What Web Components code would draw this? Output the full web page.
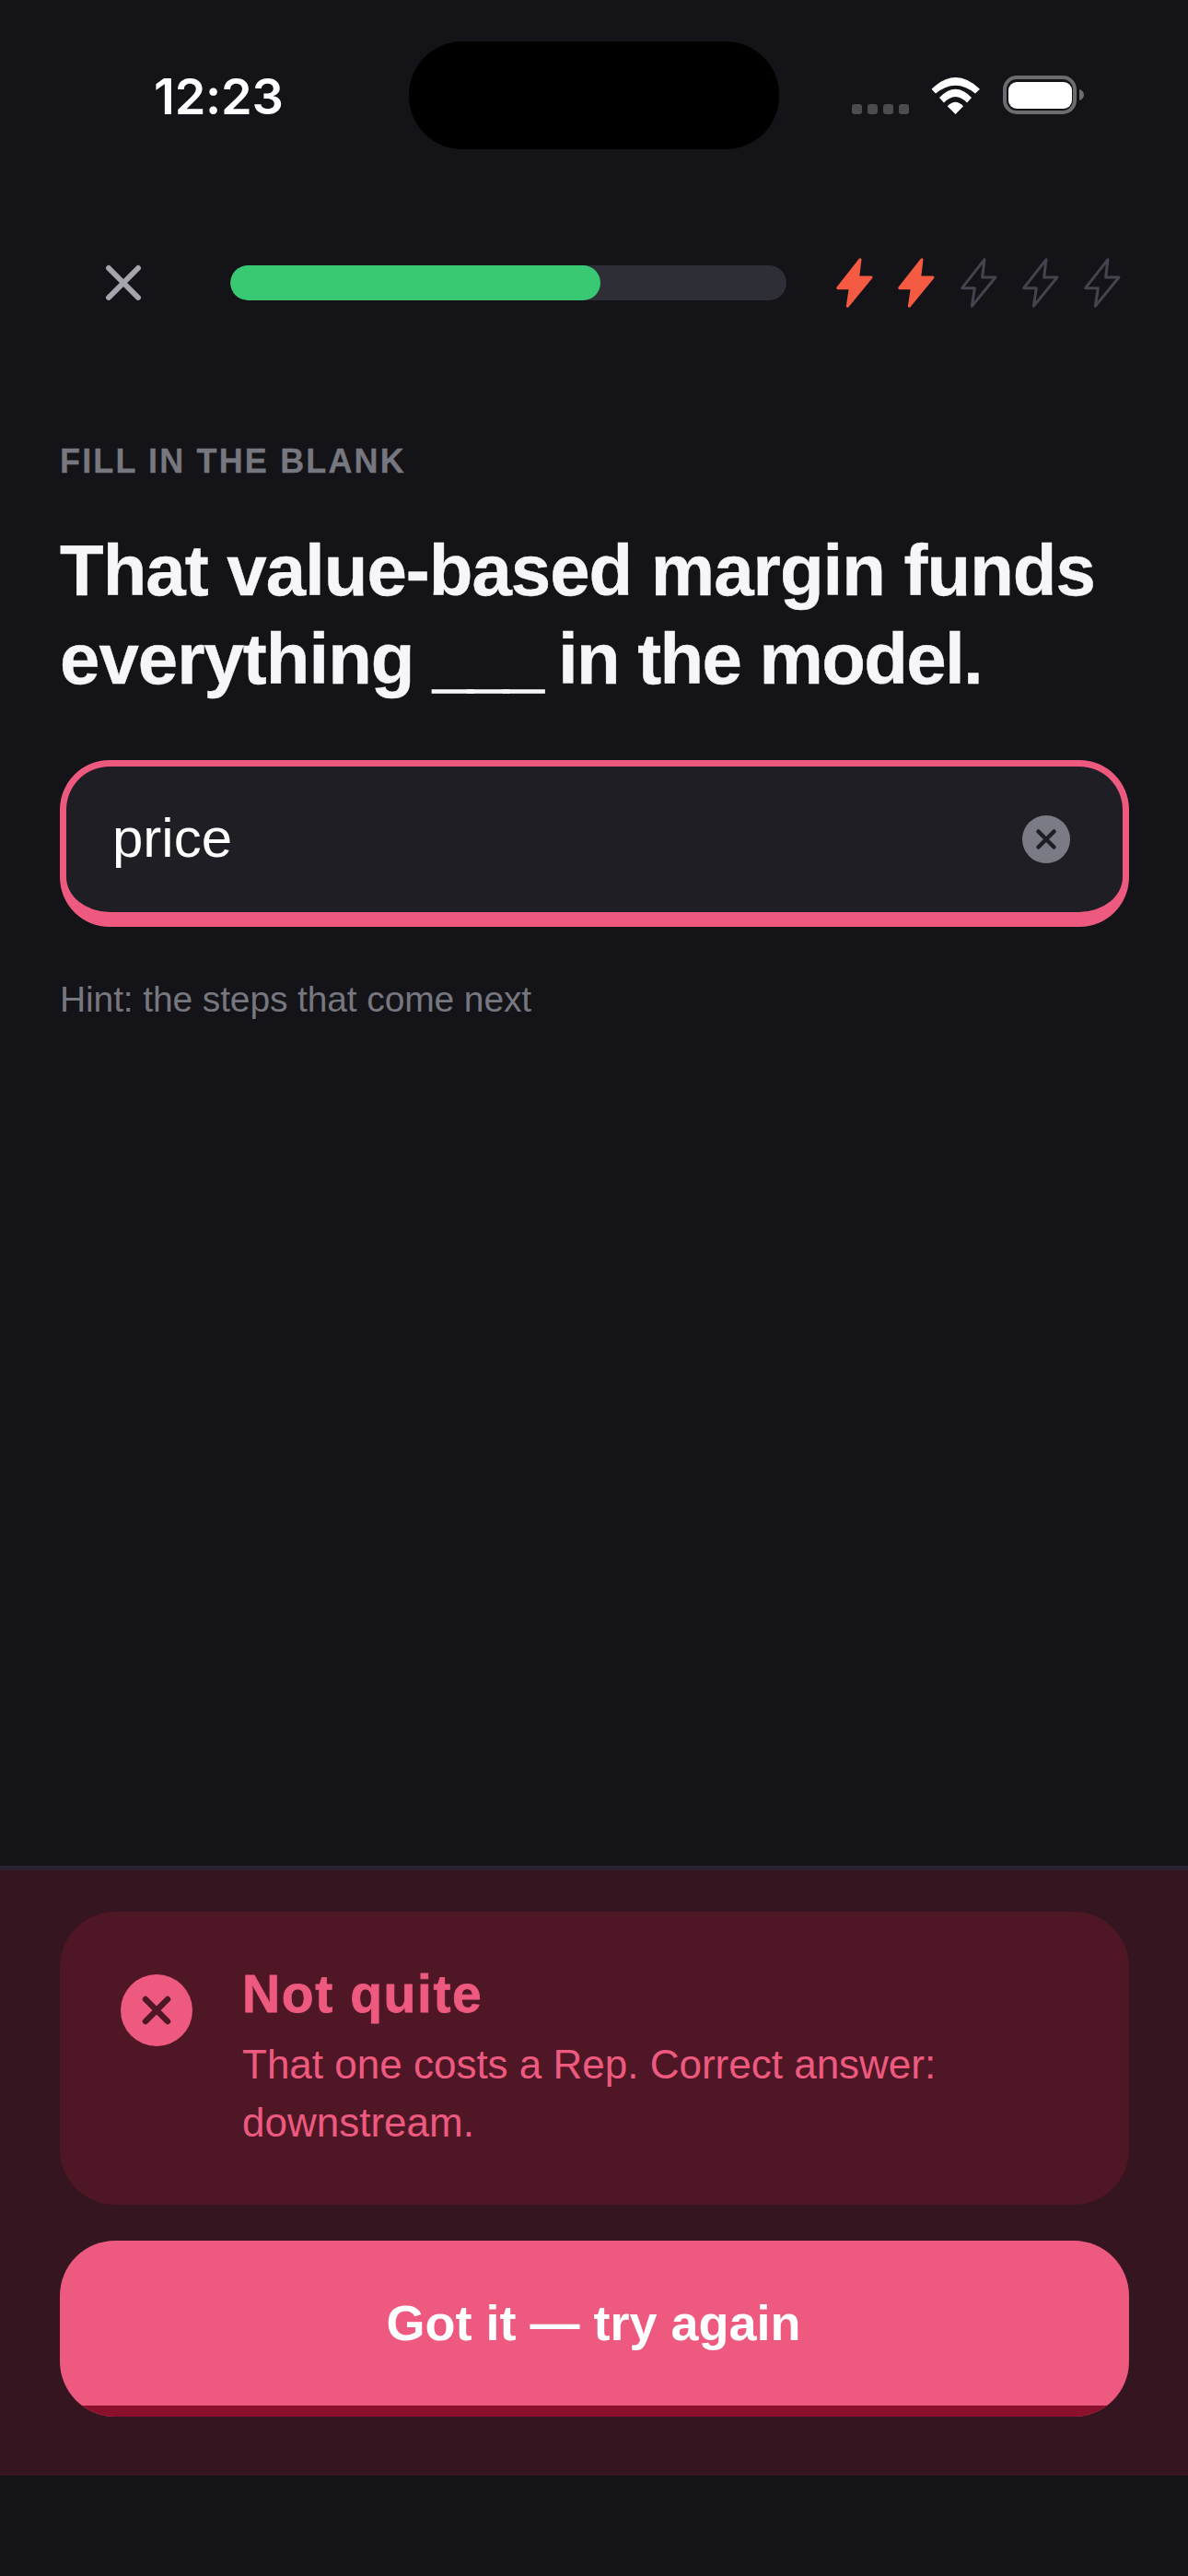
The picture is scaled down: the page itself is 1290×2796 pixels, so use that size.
<!DOCTYPE html>
<html><head><meta charset="utf-8">
<style>html,body{margin:0;background:#131318}</style></head>
<body>
<template id="t-status"><style>
:host{display:grid;grid-template-columns:444px 402px 1fr;height:117px;padding-top:45px;box-sizing:content-box}
.time{font:600 54px/1 Inter,sans-serif;color:#fff;padding-left:167px;padding-top:33px;letter-spacing:-.2px}
.island{background:#000;border-radius:58px;height:117px}
.r{display:flex;align-items:flex-end;height:79px;padding-left:79px;gap:24px}
.dots{display:flex;gap:6px}
.dots i{width:11px;height:11px;border-radius:3px;background:#4b4b50;display:block}
svg{display:block}
</style><div class="time"><slot></slot></div><div class="island"></div>
<div class="r"><div class="dots"><i></i><i></i><i></i><i></i></div>
<svg width="54" height="41" viewBox="0 0 54 41"><path fill="#fff" d="M.5 13.700Q26.500-11.700 53 13.700L48 18.500Q26.500 1 5 18.500Z"/><path fill="#fff" d="M9 23Q26.500 4.400 44 23L39 28.500Q26.500 15.500 14 28.500Z"/><path fill="#fff" d="M17.700 32.300Q26.500 23.300 35 32.300L26.500 41Z"/></svg>
<svg width="90" height="42" viewBox="0 0 90 42"><rect x="2" y="2" width="76" height="38" rx="13" fill="none" stroke="#6c6c70" stroke-width="4"/><rect x="6" y="7" width="69" height="29" rx="9" fill="#fff"/><path d="M83 15c3 .8 5 3 5 6s-2 5.200-5 6z" fill="#6c6c70"/></svg>
</div></template>

<template id="t-topbar"><style>
:host{display:flex;align-items:center;height:60px;margin-top:115px;padding-left:114px}
svg{display:block;flex:none}
.track{width:604px;height:38px;border-radius:19px;background:#2e2e37;margin:0 51px 0 96px;flex:none;overflow:hidden}
.fill{width:402px;height:38px;border-radius:19px;background:#38c972}
.bolts{display:flex;gap:20.67px}
</style>
<svg width="40" height="40" viewBox="0 0 40 40"><path d="M4 4 36 36M36 4 4 36" stroke="#a5a5ae" stroke-width="6" stroke-linecap="round"/></svg>
<div class="track"><div class="fill"></div></div>
<div class="bolts"><slot></slot></div></template>

<template id="t-bolt"><style>
:host{display:block;width:46.67px;height:60px}
svg{display:block}
path{fill:none;stroke:#44444e;stroke-linejoin:round;stroke-width:9}
:host([on]) path{fill:#f55a42;stroke:#f55a42}
</style><svg width="46.67" height="60" viewBox="135 650 140 180"><path d="M222 664 149 757H190L181 816 258 722H215Z"/></svg></template>

<template id="t-question"><style>
:host{display:block;padding:0 64px 0 65px;flex:1}
.label{font:700 36px/44px "Liberation Sans",sans-serif;letter-spacing:2.15px;color:#77777f;margin-top:142px;-webkit-text-stroke:.3px #77777f}
h1{margin:48px 0 0;font:700 78px/96px "Liberation Sans",sans-serif;color:#f6f6f9;letter-spacing:-1px;-webkit-text-stroke:.4px #f6f6f9}
.hint{font:400 39px/48px "Liberation Sans",sans-serif;color:#77777f;margin-top:55px;letter-spacing:-.13px}
</style><div class="label"><slot name="label"></slot></div><h1><slot name="q"></slot></h1><slot name="input"></slot><div class="hint"><slot name="hint"></slot></div></template>

<template id="t-line"><style>
:host{display:block;white-space:nowrap}
</style><slot></slot></template>

<template id="t-blank"><style>
:host{letter-spacing:-5px;-webkit-text-stroke:1.6px #f6f6f9}
</style><slot></slot></template>

<template id="t-tight"><style>
:host{letter-spacing:-1.6px}
</style><slot></slot></template>

<template id="t-input"><style>
:host{display:flex;align-items:center;justify-content:space-between;box-sizing:border-box;height:181px;margin-top:62px;border:7px solid #ee5a7f;border-bottom-width:16px;border-radius:54px;background:#1e1e24;padding:0 57px 0 50px;color:#fff;font:400 60px/64px "Liberation Sans",sans-serif}
span{display:block;margin-top:-2px}
svg{display:block}
</style><span><slot></slot></span>
<svg width="52" height="52" viewBox="0 0 52 52"><circle cx="26" cy="26" r="26" fill="#7b7b85"/><path d="M17.500 17.500 34.500 34.500M34.500 17.500 17.500 34.500" stroke="#1e1e24" stroke-width="4.500" stroke-linecap="round"/></svg></template>

<template id="t-panel"><style>
:host{display:block;background:#35151f;border-top:5px solid #2a2230;padding:45px 64px 64px 65px;margin-bottom:109px}
.card{display:flex;height:318px;box-sizing:border-box;border-radius:60px;background:#4f1726;padding:68px 0 0 66px}
svg{display:block;flex:none}
.txt{margin-left:54px;margin-top:-11px}
.t{font:700 57px/64px "Liberation Sans",sans-serif;color:#ee5a7f;letter-spacing:1.6px;-webkit-text-stroke:.8px #ee5a7f}
.b{font:400 44px/63px "Liberation Sans",sans-serif;color:#ee5a7f;margin-top:13px;width:860px}
</style><div class="card">
<svg width="78" height="78" viewBox="0 0 78 78"><circle cx="39" cy="39" r="39" fill="#ee5a7f"/><path d="M27 27 51 51M51 27 27 51" stroke="#4f1726" stroke-width="6.500" stroke-linecap="round"/></svg>
<div class="txt"><div class="t"><slot name="t"></slot></div><div class="b"><slot name="b"></slot></div></div></div>
<slot name="btn"></slot></template>

<template id="t-btn"><style>
:host{display:block;position:relative;overflow:hidden;box-sizing:border-box;height:191px;margin-top:39px;border-radius:60px;background:#ee5a7f;color:#fff;font:700 54px/178px "Liberation Sans",sans-serif;text-align:center;padding-right:2px}
.edge{position:absolute;left:0;right:0;bottom:0;height:12px;background:#8a102c}
</style><slot></slot><div class="edge"></div></template>

<template id="t-screen"><style>
:host{display:flex;flex-direction:column;height:2796px;background:#131318;overflow:hidden}
</style><slot></slot></template>

<x-screen>
<x-status>12:23</x-status>
<x-topbar><x-bolt on></x-bolt><x-bolt on></x-bolt><x-bolt></x-bolt><x-bolt></x-bolt><x-bolt></x-bolt></x-topbar>
<x-question>
<span slot="label">FILL IN THE BLANK</span>
<span slot="q"><x-line>That value-based margin funds</x-line><x-line>everything <x-blank>___</x-blank> <x-tight>in the model.</x-tight></x-line></span>
<x-input slot="input">price</x-input>
<span slot="hint">Hint: the steps that come next</span>
</x-question>
<x-panel>
<span slot="t">Not quite</span>
<span slot="b">That one costs a Rep. Correct answer: downstream.</span>
<x-btn slot="btn">Got it — try again</x-btn>
</x-panel>
</x-screen>
<script>
for (const [tag,id] of [['x-status','t-status'],['x-topbar','t-topbar'],['x-bolt','t-bolt'],['x-question','t-question'],['x-line','t-line'],['x-blank','t-blank'],['x-tight','t-tight'],['x-input','t-input'],['x-panel','t-panel'],['x-btn','t-btn'],['x-screen','t-screen']]) {
  customElements.define(tag, class extends HTMLElement {
    constructor(){super();this.attachShadow({mode:'open'}).appendChild(document.getElementById(id).content.cloneNode(true));}
  });
}
</script>
</body></html>
